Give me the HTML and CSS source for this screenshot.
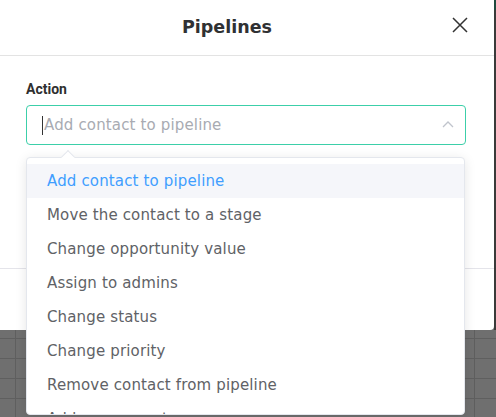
FILE: index.html
```html
<!DOCTYPE html>
<html>
<head>
<meta charset="utf-8">
<link rel="stylesheet" href="styles.css">
</head>
<body>
<div class="screen">
  <div class="top">
    <div class="modal">
      <div class="modal-header">
        <h2 class="modal-title">Pipelines</h2>
        <button class="close" aria-label="Close">
          <svg width="16" height="16" viewBox="0 0 16 16"><path d="M1 1 L15 15 M15 1 L1 15" stroke="#333" stroke-width="1.5" fill="none"/></svg>
        </button>
      </div>
      <div class="modal-body">
        <label class="field-label">Action</label>
        <div class="select">
          <div class="select-input">
            <span class="caret-cursor"></span>
            <span class="placeholder">Add contact to pipeline</span>
            <svg class="chevron" width="12" height="8" viewBox="0 0 12 8"><path d="M1 7 L6 2 L11 7" stroke="#c0c4cc" stroke-width="1.3" fill="none"/></svg>
          </div>
          <div class="dropdown">
            <span class="arrow"></span>
            <ul class="options">
              <li class="option selected">Add contact to pipeline</li>
              <li class="option">Move the contact to a stage</li>
              <li class="option">Change opportunity value</li>
              <li class="option">Assign to admins</li>
              <li class="option">Change status</li>
              <li class="option">Change priority</li>
              <li class="option">Remove contact from pipeline</li>
              <li class="option">Add a comment</li>
            </ul>
          </div>
        </div>
      </div>
      <div class="modal-footer"></div>
    </div>
    <div class="edge"></div>
  </div>
</div>
</body>
</html>
```

FILE: styles.css
```css
* { box-sizing: border-box; }
html, body { margin: 0; padding: 0; }
body {
  width: 496px;
  height: 417px;
  overflow: hidden;
  font-family: "DejaVu Sans", "Open Sans", sans-serif;
}
.screen {
  width: 496px;
  height: 417px;
  background-color: #6f6f6f;
  background-image:
    linear-gradient(to right, #5f5f5f 1px, transparent 1px),
    linear-gradient(to bottom, #5f5f5f 1px, transparent 1px);
  background-size: 459px 100%, 100% 20px;
  background-position: 15px 0, 0 18px;
}
.top {
  display: flex;
  height: 330px;
}
.modal {
  width: 494px;
  height: 330px;
  background: #fff;
  border-bottom-right-radius: 4px;
  display: flex;
  flex-direction: column;
}
.edge {
  width: 2px;
  height: 330px;
  background: linear-gradient(to bottom, #1f4a3e 0, #1f4a3e 10px, #3a3a3a 10px);
}
.modal-header {
  height: 56px;
  border-bottom: 1px solid #e3e3e3;
  display: flex;
  align-items: center;
  justify-content: center;
  position: relative;
}
.modal-title {
  margin: 0;
  font-size: 17.5px;
  font-weight: 700;
  color: #303133;
  padding-right: 40px;
  padding-bottom: 2px;
}
.close {
  position: absolute;
  right: 26px;
  top: 17px;
  width: 16px;
  height: 16px;
  padding: 0;
  border: 0;
  background: none;
  display: flex;
}
.modal-body {
  height: 212px;
  padding: 23px 28px 0 26px;
}
.field-label {
  display: block;
  font-family: Roboto, "Liberation Sans", sans-serif;
  font-weight: 700;
  font-size: 14px;
  line-height: 20px;
  color: #2f2f2f;
  margin-bottom: 6px;
}
.select {
  position: relative;
}
.select-input {
  height: 40px;
  border: 1px solid #3ccfa9;
  border-radius: 4px;
  display: flex;
  align-items: center;
  padding-left: 15px;
  padding-right: 11px;
}
.caret-cursor {
  width: 1px;
  height: 19px;
  background: #333;
}
.placeholder {
  flex: 1;
  font-size: 15px;
  letter-spacing: 0.15px;
  color: #a8abb2;
  padding-left: 1px;
  margin-top: -1px;
}
.chevron { margin-top: -3px; }
.dropdown {
  position: absolute;
  top: 52px;
  left: 0;
  width: 439px;
  height: 258px;
  background: #fff;
  border: 1px solid #e4e7ed;
  border-radius: 4px;
  box-shadow: 0 2px 12px rgba(0,0,0,0.1);
  z-index: 10;
}
.arrow {
  position: absolute;
  top: -6px;
  left: 36px;
  width: 10px;
  height: 10px;
  background: #fff;
  border-left: 1px solid #e4e7ed;
  border-top: 1px solid #e4e7ed;
  transform: rotate(45deg);
}
.options {
  list-style: none;
  margin: 0;
  padding: 6px 0 0;
  height: 100%;
  overflow: hidden;
  position: relative;
}
.option {
  height: 34px;
  line-height: 34px;
  padding-left: 20px;
  font-size: 15px;
  letter-spacing: 0.15px;
  color: #606266;
  white-space: nowrap;
}
.option.selected {
  background: #f5f6fa;
  color: #409eff;
}
.modal-footer {
  flex: 1;
  border-top: 1px solid #e4e4ea;
}
```
